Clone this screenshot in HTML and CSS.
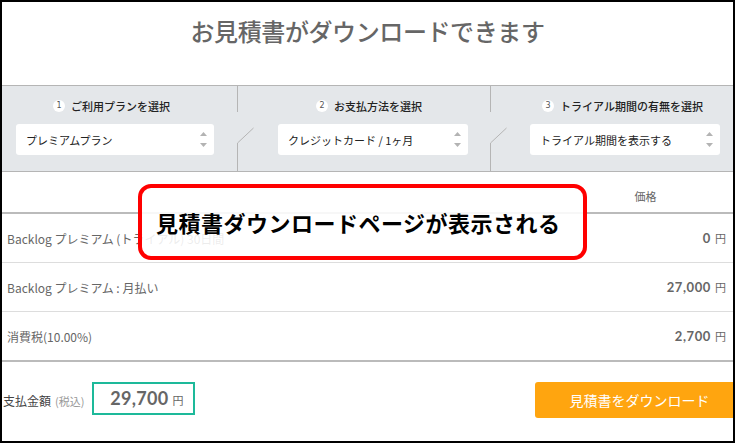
FILE: index.html
```html
<!DOCTYPE html>
<html lang="ja">
<head>
<meta charset="utf-8">
<title>お見積書ダウンロード</title>
<link rel="stylesheet" href="styles.css">
</head>
<body>
<div class="frame">
  <header class="page-head">
    <h1 class="title">お見積書がダウンロードできます</h1>
  </header>

  <section class="steps">
    <div class="step step-1">
      <div class="step-label"><span class="num">1</span><span>ご利用プランを選択</span></div>
      <div class="select"><span>プレミアムプラン</span>
        <svg class="arrows" width="7" height="15" viewBox="0 0 7 15"><polygon points="0,4 3.5,0 7,4"/><polygon points="0,11 7,11 3.5,15"/></svg>
      </div>
    </div>
    <div class="divider">
      <svg width="18" height="85" viewBox="0 0 18 85"><path d="M0.5 0V26M16.5 42L0.5 57V85"/></svg>
    </div>
    <div class="step step-2">
      <div class="step-label"><span class="num">2</span><span>お支払方法を選択</span></div>
      <div class="select"><span>クレジットカード / 1ヶ月</span>
        <svg class="arrows" width="7" height="15" viewBox="0 0 7 15"><polygon points="0,4 3.5,0 7,4"/><polygon points="0,11 7,11 3.5,15"/></svg>
      </div>
    </div>
    <div class="divider">
      <svg width="18" height="85" viewBox="0 0 18 85"><path d="M0.5 0V26M16.5 42L0.5 57V85"/></svg>
    </div>
    <div class="step step-3">
      <div class="step-label"><span class="num">3</span><span>トライアル期間の有無を選択</span></div>
      <div class="select"><span>トライアル期間を表示する</span>
        <svg class="arrows" width="7" height="15" viewBox="0 0 7 15"><polygon points="0,4 3.5,0 7,4"/><polygon points="0,11 7,11 3.5,15"/></svg>
      </div>
    </div>
  </section>

  <section class="table">
    <div class="table-head">
      <div></div>
      <div class="head-price">価格</div>
    </div>
    <div class="row">
      <div class="item">Backlog プレミアム (トライアル) 30日間</div>
      <div class="price">0<span class="yen">円</span></div>
    </div>
    <div class="row">
      <div class="item">Backlog プレミアム : 月払い</div>
      <div class="price">27,000<span class="yen">円</span></div>
    </div>
    <div class="row row-last">
      <div class="item">消費税(10.00%)</div>
      <div class="price">2,700<span class="yen">円</span></div>
    </div>
  </section>

  <footer class="summary">
    <div class="total-label">支払金額<span class="tax">(税込)</span></div>
    <div class="total-box">29,700<span class="yen">円</span></div>
    <button class="download">見積書をダウンロード</button>
  </footer>

  <div class="callout">見積書ダウンロードページが表示される</div>
</div>
</body>
</html>
```

FILE: styles.css
```css
* { box-sizing: border-box; }
html, body { margin: 0; padding: 0; background: #fff; }

.frame {
  position: relative;
  width: 735px;
  height: 443px;
  border: 2px solid #000;
  overflow: hidden;
  background: #fff;
  font-family: "Noto Sans CJK JP", "Noto Sans", sans-serif;
  color: #333;
}

.page-head {
  height: 83px;
  padding-top: 15px;
  display: flex;
  justify-content: center;
}
.title {
  margin: 0;
  font-size: 24px;
  line-height: 28px;
  font-weight: 500;
  color: #666;
  letter-spacing: -0.4px;
}

.steps {
  display: flex;
  height: 87px;
  background: #e4e7ea;
  border-top: 1px solid #b5b5b5;
  border-bottom: 1px solid #b5b5b5;
}
.step {
  display: flex;
  flex-direction: column;
  padding-top: 12px;
}
.step-1 { width: 235px; padding-left: 14px; }
.step-2 { width: 252px; padding-left: 40px; }
.step-3 { flex: 1; padding-left: 39px; }

.step-label {
  height: 16px;
  display: flex;
  align-items: center;
  gap: 6px;
  font-size: 11px;
  line-height: 16px;
  font-weight: 500;
  color: #222;
}
.step-1 .step-label { padding-left: 37px; }
.step-2 .step-label { padding-left: 38px; }
.step-3 .step-label { padding-left: 12px; }

.num {
  width: 12px;
  height: 12px;
  border-radius: 50%;
  background: #fff;
  color: #555;
  font-family: "DejaVu Sans", sans-serif;
  font-weight: 400;
  font-size: 8px;
  line-height: 12px;
  text-align: center;
}

.select {
  margin-top: 10px;
  width: 190px;
  height: 31px;
  background: #fff;
  border-radius: 3px;
  display: flex;
  align-items: center;
  justify-content: space-between;
  padding: 0 7px 0 10px;
  font-size: 11px;
  color: #222;
}
.step-1 .select { width: 198px; }
.arrows { fill: #b3b3b3; margin-top: -1px; }

.divider {
  position: relative;
  width: 1px;
}
.divider svg {
  position: absolute;
  left: 0;
  top: 0;
  overflow: visible;
}
.divider path {
  fill: none;
  stroke: #b5b5b5;
  stroke-width: 1;
}

.table-head,
.row {
  display: grid;
  grid-template-columns: 1fr 175px;
}
.table-head {
  height: 42px;
  border-bottom: 2px solid #bbb;
}
.head-price {
  padding-top: 16px;
  font-size: 11px;
  line-height: 16px;
  text-align: center;
  color: #666;
}
.row {
  height: 49px;
  align-items: center;
  border-bottom: 1px solid #ddd;
}
.row-last {
  height: 50px;
  border-bottom: 2px solid #bbb;
}
.item {
  padding-left: 5px;
  font-size: 12px;
  color: #666;
}
.price {
  text-align: right;
  padding-right: 7px;
  font-family: "Lato", "Noto Sans", sans-serif;
  font-weight: 700;
  font-size: 13px;
  letter-spacing: 0.6px;
  color: #666;
}
.yen {
  font-family: "Noto Sans CJK JP", sans-serif;
  font-weight: 400;
  font-size: 11px;
  letter-spacing: 0;
  margin-left: 4px;
  color: #666;
}

.summary {
  height: 78px;
  display: flex;
  align-items: flex-start;
  padding-top: 20px;
}
.total-label {
  padding-left: 1px;
  padding-top: 2px;
  line-height: 33px;
  font-size: 12px;
  color: #444;
}
.tax {
  margin-left: 4px;
  font-size: 11px;
  color: #999;
}
.total-box {
  margin-left: 8px;
  width: 103px;
  height: 33px;
  border: 2px solid #1db99a;
  text-align: right;
  padding-right: 10px;
  font-family: "Lato", "Noto Sans", sans-serif;
  font-weight: 700;
  font-size: 18px;
  line-height: 29px;
  letter-spacing: 0.3px;
  color: #666;
}
.download {
  margin-left: auto;
  margin-right: -11px;
  width: 209px;
  height: 36px;
  border: none;
  border-radius: 3px;
  background: #ffa50f;
  color: #fff;
  font-family: "Noto Sans CJK JP", sans-serif;
  font-size: 14px;
  padding: 0;
}

.callout {
  position: absolute;
  left: 136px;
  top: 182px;
  width: 449px;
  height: 76px;
  border: 4px solid #ff0000;
  border-radius: 13px;
  background: rgba(255, 255, 255, 0.88);
  padding-left: 14px;
  display: flex;
  align-items: center;
  font-size: 22px;
  font-weight: 700;
  letter-spacing: 0.5px;
  color: #000;
}
```
